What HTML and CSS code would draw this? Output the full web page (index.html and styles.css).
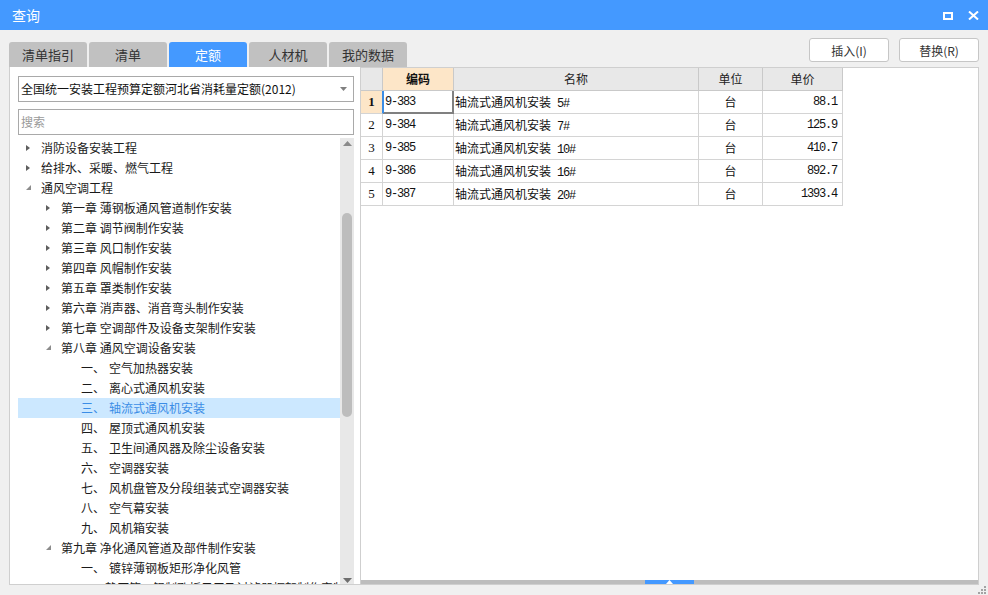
FILE: index.html
```html
<!DOCTYPE html>
<html lang="zh-CN">
<head>
<meta charset="utf-8">
<title>查询</title>
<link rel="stylesheet" href="styles.css">
</head>
<body>
<div class="window">
  <header class="titlebar">
    <span class="title">查询</span>
    <div class="win-ctrls">
      <svg class="ic-max" width="10" height="8" viewBox="0 0 10 8"><rect x="1" y="1" width="8" height="6" fill="none" stroke="#fff" stroke-width="2"/></svg>
      <svg class="ic-close" width="11" height="9" viewBox="0 0 11 9"><path d="M1 0.5 L10 8.5 M10 0.5 L1 8.5" stroke="#fff" stroke-width="2" fill="none"/></svg>
    </div>
  </header>
  <div class="content">
    <section class="left">
      <nav class="tabs">
        <div class="tab">清单指引</div>
        <div class="tab">清单</div>
        <div class="tab active">定额</div>
        <div class="tab">人材机</div>
        <div class="tab">我的数据</div>
      </nav>
      <div class="panel left-panel">
        <div class="select">
          <span class="select-text">全国统一安装工程预算定额河北省消耗量定额(2012)</span>
          <svg class="select-arrow" width="7" height="4" viewBox="0 0 7 4"><path d="M0 0 H7 L3.5 4 Z" fill="#808080"/></svg>
        </div>
        <div class="search">搜索</div>
        <div class="tree-wrap">
          <ul class="tree">
            <li class="node l1"><span class="tw c"></span>消防设备安装工程</li>
            <li class="node l1"><span class="tw c"></span>给排水、采暖、燃气工程</li>
            <li class="node l1"><span class="tw e"></span>通风空调工程</li>
            <li class="node l2"><span class="tw c"></span>第一章 薄钢板通风管道制作安装</li>
            <li class="node l2"><span class="tw c"></span>第二章 调节阀制作安装</li>
            <li class="node l2"><span class="tw c"></span>第三章 风口制作安装</li>
            <li class="node l2"><span class="tw c"></span>第四章 风帽制作安装</li>
            <li class="node l2"><span class="tw c"></span>第五章 罩类制作安装</li>
            <li class="node l2"><span class="tw c"></span>第六章 消声器、消音弯头制作安装</li>
            <li class="node l2"><span class="tw c"></span>第七章 空调部件及设备支架制作安装</li>
            <li class="node l2"><span class="tw e"></span>第八章 通风空调设备安装</li>
            <li class="node l3"><span class="lb">一、</span>空气加热器安装</li>
            <li class="node l3"><span class="lb">二、</span>离心式通风机安装</li>
            <li class="node l3 sel"><span class="lb">三、</span>轴流式通风机安装</li>
            <li class="node l3"><span class="lb">四、</span>屋顶式通风机安装</li>
            <li class="node l3"><span class="lb">五、</span>卫生间通风器及除尘设备安装</li>
            <li class="node l3"><span class="lb">六、</span>空调器安装</li>
            <li class="node l3"><span class="lb">七、</span>风机盘管及分段组装式空调器安装</li>
            <li class="node l3"><span class="lb">八、</span>空气幕安装</li>
            <li class="node l3"><span class="lb">九、</span>风机箱安装</li>
            <li class="node l2"><span class="tw e"></span>第九章 净化通风管道及部件制作安装</li>
            <li class="node l3"><span class="lb">一、</span>镀锌薄钢板矩形净化风管</li>
            <li class="node l3"><span class="lb">二、</span>静压箱、铝制孔板风口及过滤器框架制作安装</li>
          </ul>
          <div class="vscroll">
            <div class="sb-btn up"><svg width="9" height="5" viewBox="0 0 9 5"><path d="M0 5 H9 L4.5 0 Z" fill="#8a8a8a"/></svg></div>
            <div class="sb-track"><div class="sb-thumb"></div></div>
            <div class="sb-btn down"><svg width="9" height="5" viewBox="0 0 9 5"><path d="M0 0 H9 L4.5 5 Z" fill="#6e6e6e"/></svg></div>
          </div>
        </div>
      </div>
    </section>
    <section class="right">
      <div class="toolbar">
        <button class="btn">插入(I)</button>
        <button class="btn">替换(R)</button>
      </div>
      <div class="panel right-panel">
        <table class="grid">
          <colgroup>
            <col class="c-no"><col class="c-code"><col class="c-name"><col class="c-unit"><col class="c-price">
          </colgroup>
          <thead>
            <tr><th class="no"></th><th class="hl">编码</th><th>名称</th><th>单位</th><th>单价</th></tr>
          </thead>
          <tbody>
            <tr class="cur"><td class="no">1</td><td class="code selcell">9-383</td><td class="name">轴流式通风机安装<span class="mono"> 5#</span></td><td class="unit">台</td><td class="price">88.1</td></tr>
            <tr><td class="no">2</td><td class="code">9-384</td><td class="name">轴流式通风机安装<span class="mono"> 7#</span></td><td class="unit">台</td><td class="price">125.9</td></tr>
            <tr><td class="no">3</td><td class="code">9-385</td><td class="name">轴流式通风机安装<span class="mono"> 10#</span></td><td class="unit">台</td><td class="price">410.7</td></tr>
            <tr><td class="no">4</td><td class="code">9-386</td><td class="name">轴流式通风机安装<span class="mono"> 16#</span></td><td class="unit">台</td><td class="price">892.7</td></tr>
            <tr><td class="no">5</td><td class="code">9-387</td><td class="name">轴流式通风机安装<span class="mono"> 20#</span></td><td class="unit">台</td><td class="price">1393.4</td></tr>
          </tbody>
        </table>
        <div class="fill"></div>
        <div class="hsplit"><div class="handle"><svg width="7" height="4" viewBox="0 0 7 4"><path d="M0 4 H7 L3.5 0 Z" fill="#fff"/></svg></div></div>
      </div>
    </section>
  </div>
  <div class="grip">
    <i style="grid-area:1/3"></i>
    <i style="grid-area:2/2"></i><i style="grid-area:2/3"></i>
    <i style="grid-area:3/1"></i><i style="grid-area:3/2"></i><i style="grid-area:3/3"></i>
  </div>
</div>
</body>
</html>
```
FILE: styles.css
```css
html, body {
  margin: 0;
  height: 100%;
  overflow: hidden;
}
body {
  background: #f0f0f0;
  font-family: "Noto Sans CJK SC", "Microsoft YaHei", sans-serif;
  font-size: 12px;
  color: #222;
}
.window {
  position: relative;
  height: 595px;
}
.titlebar {
  height: 30px;
  background: #4499ff;
  display: flex;
  align-items: center;
  padding: 0 9px 0 12px;
  color: #fff;
}
.title {
  flex: 1;
  font-size: 14px;
  line-height: 30px;
}
.win-ctrls {
  display: flex;
  align-items: center;
  gap: 15px;
}
.ic-max { margin-top: 1px; }
.content {
  display: flex;
  padding: 0 9px;
  height: 565px;
}
.left {
  width: 351px;
  flex: none;
  display: flex;
  flex-direction: column;
  position: relative;
  z-index: 1;
}
.tabs {
  display: flex;
  gap: 2px;
  margin-top: 12px;
  height: 25px;
}
.tab {
  flex: none;
  width: 78px;
  background: #c1c1c1;
  border-radius: 3px 3px 0 0;
  display: flex;
  align-items: center;
  justify-content: center;
  color: #333;
  font-size: 13px;
  line-height: 25px;
}
.tab.active {
  background: #4499ff;
  color: #fff;
}
.panel {
  background: #fff;
  border: 1px solid #cfcfcf;
  box-sizing: border-box;
  height: 518px;
}
.left-panel {
  border-top: none;
  border-right: none;
  padding: 9px 6px 0 8px;
  display: flex;
  flex-direction: column;
}
.select, .search {
  height: 26px;
  box-sizing: border-box;
  border: 1px solid #a9a9a9;
  display: flex;
  align-items: center;
  padding: 0 0 0 2px;
  line-height: 24px;
}
.select-text { flex: 1; color: #111; }
.select-arrow { margin-right: 6px; }
.search {
  margin-top: 7px;
  color: #9a9a9a;
}
.tree-wrap {
  margin-top: 3px;
  flex: 1;
  display: flex;
  min-height: 0;
}
.tree {
  flex: 1;
  list-style: none;
  margin: 0;
  padding: 0;
  overflow: hidden;
}
.node {
  height: 20px;
  display: flex;
  align-items: center;
  white-space: nowrap;
  color: #1a1a1a;
  line-height: 20px;
}
.l1 { padding-left: 8px; }
.l2 { padding-left: 28px; }
.l3 { padding-left: 63px; }
.lb {
  display: inline-block;
  width: 28px;
}
.node.sel {
  background: #cce8ff;
  color: #3b8de6;
}
.tw {
  width: 15px;
  height: 20px;
  position: relative;
  flex: none;
}
.tw.c::before {
  content: "";
  position: absolute;
  left: 0;
  top: 7px;
  border-left: 4px solid #5e5e5e;
  border-top: 3.5px solid transparent;
  border-bottom: 3.5px solid transparent;
}
.tw.e::before {
  content: "";
  position: absolute;
  left: 0;
  top: 7px;
  border-right: 5px solid #8c8c8c;
  border-top: 5px solid transparent;
}
.vscroll {
  width: 14px;
  background: #e8e8e8;
  display: flex;
  flex-direction: column;
}
.sb-btn {
  height: 13px;
  display: flex;
  justify-content: center;
}
.sb-btn.up { align-items: flex-start; padding-top: 3px; box-sizing: border-box; }
.sb-btn.down { align-items: flex-end; padding-bottom: 1px; box-sizing: border-box; }
.sb-track { flex: 1; padding: 62px 2px 0; }
.sb-thumb {
  height: 204px;
  width: 10px;
  background: #bdbdbd;
  border-radius: 5px;
}
.right {
  width: 619px;
  flex: none;
  display: flex;
  flex-direction: column;
}
.toolbar {
  display: flex;
  justify-content: flex-end;
  gap: 10px;
  margin-top: 8px;
  margin-bottom: 5px;
  height: 24px;
}
.btn {
  width: 80px;
  height: 24px;
  background: #fff;
  border: 1px solid #c6c6c6;
  border-radius: 3px;
  font-family: inherit;
  font-size: 12px;
  color: #333;
  padding: 0;
}
.right-panel {
  display: flex;
  flex-direction: column;
}
.grid {
  width: 482px;
  table-layout: fixed;
  border-collapse: separate;
  border-spacing: 0;
}
.c-no { width: 22px; }
.c-code { width: 71px; }
.c-name { width: 245px; }
.c-unit { width: 64px; }
.c-price { width: 80px; }
.grid th, .grid td {
  border-right: 1px solid #d4d4d4;
  border-bottom: 1px solid #d4d4d4;
  padding: 0;
  white-space: nowrap;
  overflow: hidden;
  line-height: 20px;
  vertical-align: middle;
}
.grid thead tr { height: 23px; }
.grid tbody tr { height: 23px; }
.grid th {
  background: #e8e8e8;
  font-weight: normal;
  color: #222;
  border-color: #c9c9c9;
}
.grid th.hl {
  background: #fde6c8;
  font-weight: bold;
  color: #111;
}
.grid td {
  color: #111;
}
.grid td.no {
  text-align: center;
  font-family: "Liberation Serif", serif;
  font-size: 13px;
}
.grid tr.cur td.no {
  background: #fde6c8;
  font-weight: bold;
  border-right-color: #3b8de6;
}
.code, .price, .mono {
  font-family: "Liberation Mono", monospace;
  font-size: 12px;
  letter-spacing: -1.2px;
}
.mono { line-height: 1; }
.code { padding-left: 2px !important; }
.name { padding-left: 1px !important; }
.unit { text-align: center; }
.price { text-align: right; padding-right: 5px !important; }
.selcell {
  box-shadow: inset 1px 0 0 #3b8de6, inset -1px -1px 0 #808080;
  border-right-color: #808080 !important;
  border-bottom-color: #808080 !important;
}
.fill { flex: 1; }
.hsplit {
  height: 4px;
  background: #bdbdbd;
  display: flex;
  justify-content: center;
}
.handle {
  width: 49px;
  height: 4px;
  background: #4499ff;
  display: flex;
  align-items: center;
  justify-content: center;
}
.handle svg { display: block; }
.grip {
  position: absolute;
  right: 2px;
  bottom: 1px;
  display: grid;
  grid-template-columns: repeat(3, 2px);
  grid-template-rows: repeat(3, 2px);
  gap: 1px;
}
.grip i {
  display: block;
  background: #a3a3a3;
}
```
